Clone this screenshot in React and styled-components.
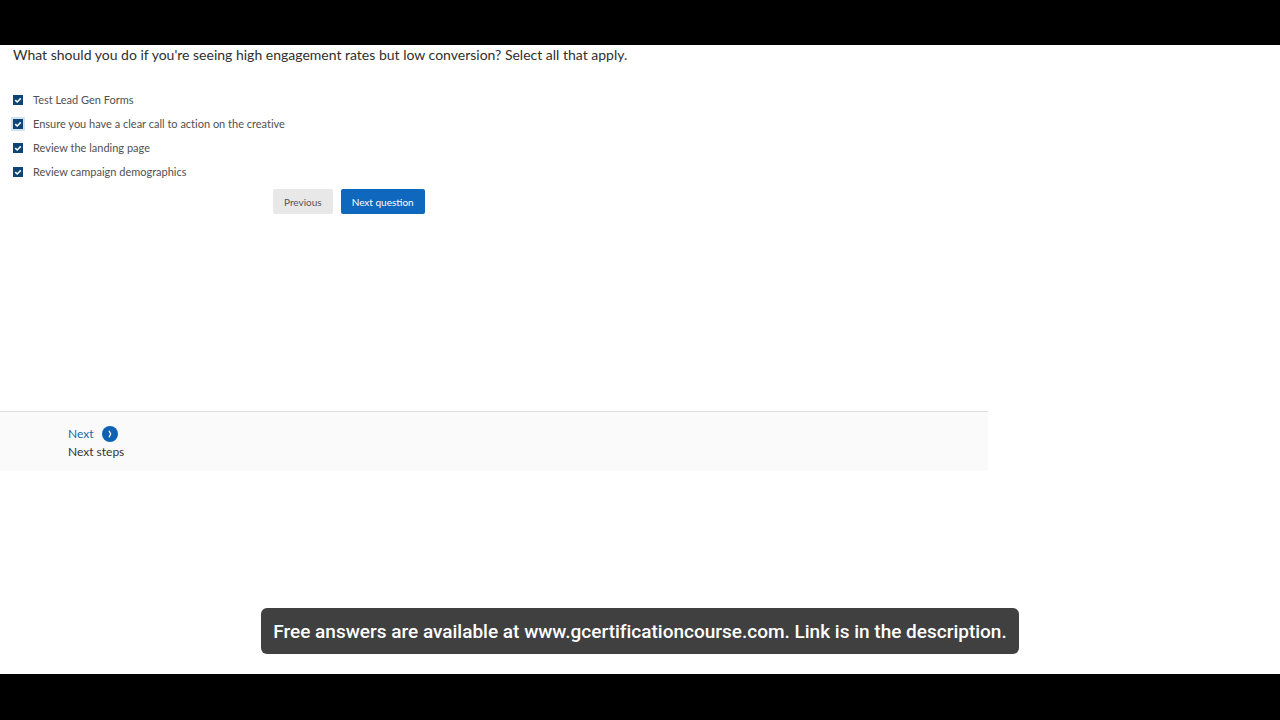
import { useState } from "react";
import styled, { createGlobalStyle } from "styled-components";

const GlobalStyle = createGlobalStyle`
  * {
    box-sizing: border-box;
  }

  body {
    margin: 0;
    background: #000;
    color: #333;
    font-family: Lato, "Liberation Sans", sans-serif;
    font-variant-ligatures: none;
  }
`;

const Page = styled.div`
  min-height: 100vh;
  display: flex;
  flex-direction: column;
  padding: 45px 0 46px;
  background: #000;
`;

const Content = styled.main`
  flex: 1;
  display: flex;
  flex-direction: column;
  background: #fff;
`;

const Quiz = styled.form`
  display: flex;
  flex-direction: column;
  padding: 0 13px;
`;

const Question = styled.h1`
  margin: 0 0 23px;
  font-size: 14px;
  font-weight: 400;
  line-height: 20px;
  color: #2f2f2f;
`;

const Options = styled.fieldset`
  display: flex;
  flex-direction: column;
  align-items: flex-start;
  margin: 0;
  padding: 0;
  border: 0;
  min-width: 0;
`;

const Option = styled.label`
  display: flex;
  align-items: center;
  gap: 10px;
  height: 24px;
  font-size: 11px;
  line-height: 16px;
  color: #505050;
`;

const CheckBox = styled.span`
  display: grid;
  width: 10px;
  height: 10px;
  box-shadow: ${({ $focused }) => ($focused ? "0 0 0 2px #d5e3f0" : "none")};

  input,
  svg {
    grid-area: 1 / 1;
    width: 10px;
    height: 10px;
    margin: 0;
  }

  input {
    appearance: none;
    outline: none;
    border: 1px solid #0b4479;
    background: #fff;
  }

  input:checked {
    background: #0b4479;
  }

  svg {
    pointer-events: none;
    z-index: 1;
  }
`;

const Actions = styled.div`
  display: flex;
  gap: 8px;
  margin: 5px 0 0 260px;
`;

const Button = styled.button`
  height: 25px;
  padding: 0 11px;
  border: 0;
  border-radius: 2px;
  background: ${({ $primary }) => ($primary ? "#0f68bd" : "#e8e8e8")};
  color: ${({ $primary }) => ($primary ? "#fff" : "#555")};
  font-family: inherit;
  font-size: 10px;
  line-height: 16px;
  white-space: nowrap;
`;

const NextPanel = styled.nav`
  display: flex;
  width: 77.2%;
  margin-top: 197px;
  padding: 13px 68px 10px;
  border-top: 1px solid #dedede;
  background: #fafafa;
`;

const NextLink = styled.a`
  display: flex;
  flex-direction: column;
  color: #333;
  font-size: 12px;
  line-height: 18px;
  text-decoration: none;
`;

const NextLabel = styled.span`
  display: flex;
  align-items: center;
  gap: 8px;
  color: #1b69a8;
`;

const Caption = styled.p`
  align-self: center;
  margin: auto 16px 20px;
  padding: 12px 12px 10px;
  border-radius: 6px;
  background: #404040;
  color: #fff;
  font-family: Roboto, "Liberation Sans", sans-serif;
  font-size: 19px;
  font-weight: 500;
  line-height: 24px;
`;

const answers = [
  { id: "forms", label: "Test Lead Gen Forms" },
  { id: "cta", label: "Ensure you have a clear call to action on the creative" },
  { id: "landing", label: "Review the landing page" },
  { id: "demographics", label: "Review campaign demographics" },
];

const ArrowIcon = () => (
  <svg width="16" height="16" viewBox="0 0 16 16" aria-hidden="true">
    <circle cx="8" cy="8" r="8" fill="#0f62b3" />
    <path d="M7 4.8 L8.7 8 L7 11.2" fill="none" stroke="#fff" strokeWidth="1.3" />
  </svg>
);

const App = () => {
  const [selected, setSelected] = useState(answers.map((answer) => answer.id));
  const [current, setCurrent] = useState("cta");

  const toggle = (id) => {
    setCurrent(id);
    setSelected((ids) => (ids.includes(id) ? ids.filter((item) => item !== id) : [...ids, id]));
  };

  return (
    <Page>
      <GlobalStyle />
      <Content>
        <Quiz onSubmit={(e) => e.preventDefault()}>
          <Question id="question">
            What should you do if you're seeing high engagement rates but low conversion? Select all that apply.
          </Question>
          <Options aria-labelledby="question">
            {answers.map(({ id, label }) => (
              <Option key={id} htmlFor={id}>
                <CheckBox $focused={current === id}>
                  <input type="checkbox" id={id} checked={selected.includes(id)} onChange={() => toggle(id)} />
                  {selected.includes(id) && (
                    <svg viewBox="0 0 10 10" aria-hidden="true">
                      <path d="M2.2 5.1 L4.2 7 L7.8 3.4" fill="none" stroke="#fff" strokeWidth="1.6" />
                    </svg>
                  )}
                </CheckBox>
                {label}
              </Option>
            ))}
          </Options>
          <Actions>
            <Button type="button">Previous</Button>
            <Button type="submit" $primary>
              Next question
            </Button>
          </Actions>
        </Quiz>

        <NextPanel>
          <NextLink href="#next-steps">
            <NextLabel>
              Next
              <ArrowIcon />
            </NextLabel>
            Next steps
          </NextLink>
        </NextPanel>

        <Caption>Free answers are available at www.gcertificationcourse.com. Link is in the description.</Caption>
      </Content>
    </Page>
  );
};

export default App;
